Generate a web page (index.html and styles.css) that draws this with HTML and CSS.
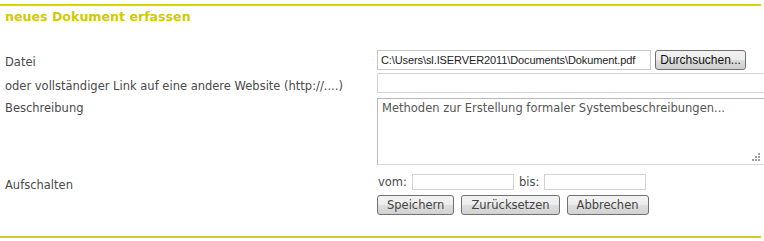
FILE: index.html
```html
<!DOCTYPE html>
<html lang="de">
<head>
  <meta charset="UTF-8">
  <title>neues Dokument erfassen</title>
  <link rel="stylesheet" href="styles.css">
</head>
<body>
  <div class="page">
    <h1>neues Dokument erfassen</h1>
    <div class="form">
      <label class="lbl" for="datei">Datei</label>
      <div class="field file-row">
        <input class="file-path" id="datei" type="text" value="C:\Users\sl.ISERVER2011\Documents\Dokument.pdf">
        <button class="browse">Durchsuchen...</button>
      </div>

      <label class="lbl" for="link">oder vollständiger Link auf eine andere Website (http://....)</label>
      <div class="field">
        <input class="wide" id="link" type="text">
      </div>

      <label class="lbl lbl-top" for="beschreibung">Beschreibung</label>
      <div class="field text-wrap">
        <textarea id="beschreibung">Methoden zur Erstellung formaler Systembeschreibungen...</textarea>
        <!-- Griff unten rechts -->
        <svg class="grip" width="8" height="8" viewBox="0 0 8 8">
          <rect x="6" y="0" width="2" height="2" fill="#a0a0a0"/>
          <rect x="3" y="3" width="2" height="2" fill="#a0a0a0"/>
          <rect x="6" y="3" width="2" height="2" fill="#a0a0a0"/>
          <rect x="0" y="6" width="2" height="2" fill="#a0a0a0"/>
          <rect x="3" y="6" width="2" height="2" fill="#a0a0a0"/>
          <rect x="6" y="6" width="2" height="2" fill="#a0a0a0"/>
        </svg>
      </div>

      <label class="lbl" for="vom">Aufschalten</label>
      <div class="field date-row">
        <span class="first">vom:</span><input class="date" id="vom" type="text">
        <span>bis:</span><input class="date" id="bis" type="text">
      </div>

      <div></div>
      <div class="field actions">
        <button class="btn">Speichern</button>
        <button class="btn">Zurücksetzen</button>
        <button class="btn">Abbrechen</button>
      </div>
    </div>
    <div class="bottom-line"></div>
  </div>
</body>
</html>
```

FILE: styles.css
```css
body {
  margin: 0;
  padding: 0;
  background-color: #fff;
  font-family: "DejaVu Sans", Verdana, sans-serif;
  font-size: 11.5px;
  color: #4a4a4a;
  overflow: hidden;
}
.page {
  width: 761px;
  padding-top: 4px;
}
h1 {
  margin: 0;
  border-top: 2px solid #d6d300;
  padding: 3px 5px 0;
  font-size: 12.6px;
  font-weight: bold;
  color: #cfcb00;
  height: 22px;
}
.form {
  display: grid;
  grid-template-columns: 377px 1fr;
  align-items: center;
  margin-top: 19px;
}
.lbl {
  padding-left: 5px;
}
.lbl-top {
  align-self: start;
  padding-top: 3px;
}
.field {
  display: flex;
  align-items: center;
}
.file-row {
  gap: 4px;
  margin-bottom: 3px;
}
input {
  box-sizing: border-box;
  height: 20px;
  border: 1px solid #d3d3d3;
  padding: 0 3px;
  font-family: "DejaVu Sans", Verdana, sans-serif;
  font-size: 11px;
  color: #4a4a4a;
}
.file-path {
  width: 274px;
  border-color: #c6c6c6;
  font-family: "Liberation Sans", Arial, sans-serif;
  font-size: 11px;
  letter-spacing: -0.1px;
  color: #222;
  padding-left: 3px;
}
.browse {
  box-sizing: border-box;
  height: 20px;
  width: 91px;
  padding: 0;
  border: 1px solid #707070;
  border-radius: 3px;
  background: linear-gradient(#f2f2f2, #ebebeb 50%, #dddddd 51%, #cfcfcf);
  font-family: "Liberation Sans", Arial, sans-serif;
  font-size: 12px;
  color: #111;
}
.wide {
  width: 400px;
  margin-bottom: 5px;
}
.text-wrap {
  position: relative;
}
textarea {
  box-sizing: border-box;
  width: 387px;
  height: 67px;
  border: 1px solid #b9b9b9;
  border-bottom-color: #dadada;
  border-right: none;
  padding: 2px 4px;
  font-family: "DejaVu Sans", Verdana, sans-serif;
  font-size: 11.5px;
  color: #555;
  resize: none;
  margin-bottom: 9px;
}
.grip {
  position: absolute;
  left: 375px;
  top: 55px;
}
.date-row {
  gap: 5px;
  height: 16px;
  margin-bottom: 5px;
}
.date-row .first {
  margin-left: 1px;
}
.date {
  width: 102px;
  height: 16px;
}
.actions {
  gap: 7px;
}
.btn {
  box-sizing: border-box;
  height: 20px;
  padding: 0 9px;
  border: 1px solid #707070;
  border-radius: 3px;
  background: linear-gradient(#f4f4f4, #ececec 50%, #dedede 51%, #d2d2d2);
  font-family: "DejaVu Sans", Verdana, sans-serif;
  font-size: 11.5px;
  color: #444;
}
.bottom-line {
  margin-top: 21px;
  height: 2px;
  background-color: #cccc22;
}
```
